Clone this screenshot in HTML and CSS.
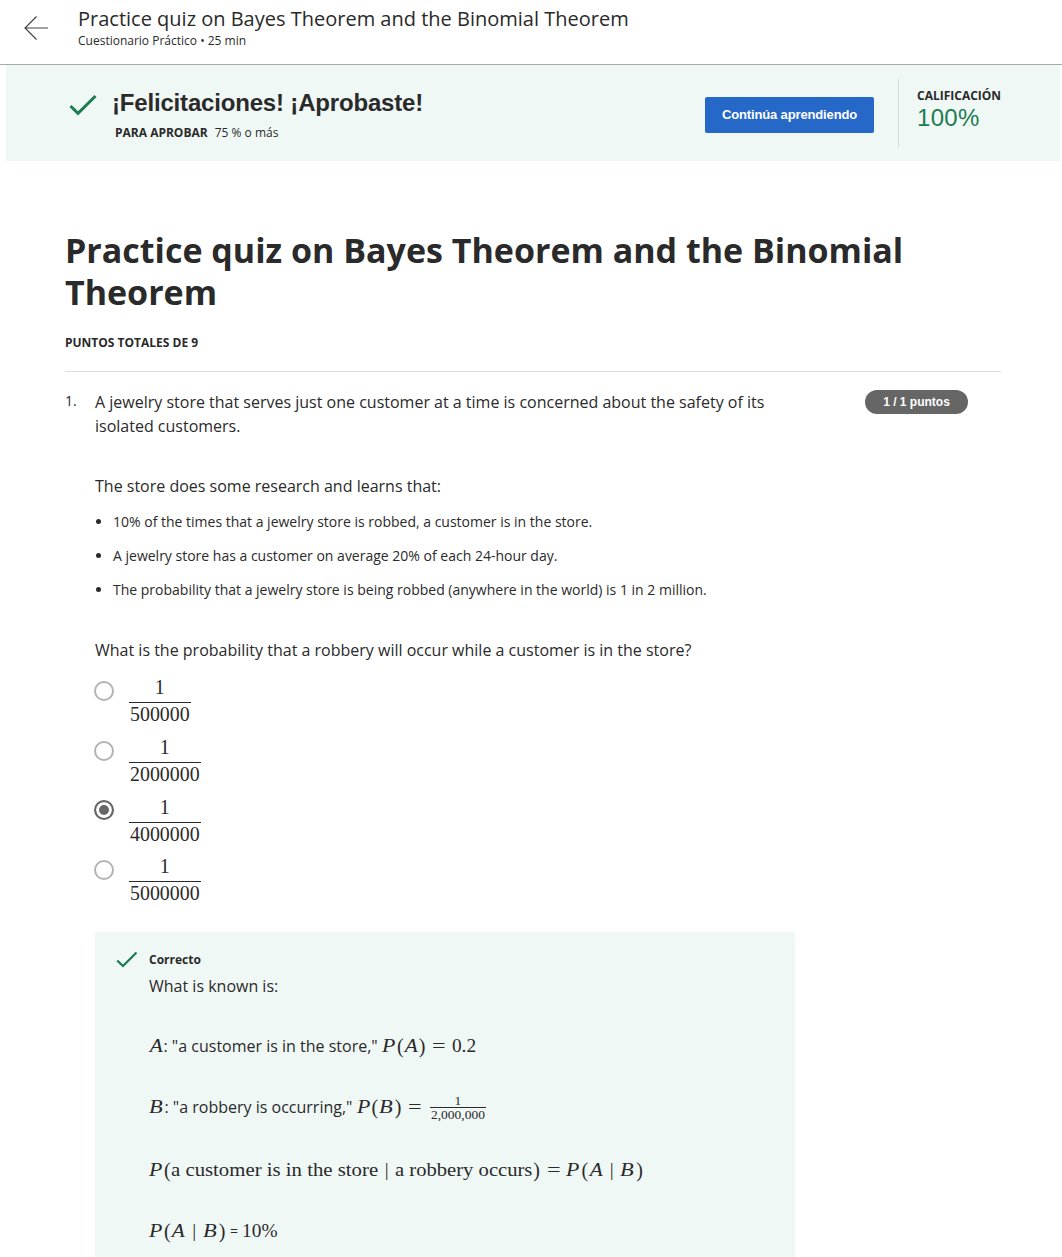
FILE: index.html
```html
<!DOCTYPE html>
<html lang="es">
<head>
<meta charset="utf-8">
<title>Practice quiz on Bayes Theorem and the Binomial Theorem</title>
<link rel="stylesheet" href="styles.css">
</head>
<body>
<header class="topbar">
  <svg class="back" width="26" height="26" viewBox="0 0 26 26" fill="none" stroke="#444" stroke-width="1.2"><path d="M25 13H2M13.500 1.500L2 13l11.500 11.500"/></svg>
  <div>
    <div class="top-title">Practice quiz on Bayes Theorem and the Binomial Theorem</div>
    <div class="top-sub">Cuestionario Práctico • 25 min</div>
  </div>
</header>
<section class="banner">
  <svg class="big-check" width="28" height="22" viewBox="0 0 28 22" fill="none" stroke="#1d7c50" stroke-width="3"><path d="M1.500 12L9 19.300 26.500 2"/></svg>
  <div class="result">
    <div class="congrats"><span>¡Felicitaciones! ¡Aprobaste!</span></div>
    <div class="pass"><b>PARA APROBAR</b><span>75 % o más</span></div>
  </div>
  <button class="continue"><span>Continúa aprendiendo</span></button>
  <div class="grade">
    <div class="grade-label">CALIFICACIÓN</div>
    <div class="grade-value">100%</div>
  </div>
</section>
<main class="quiz">
  <h1>Practice quiz on Bayes Theorem and the Binomial Theorem</h1>
  <div class="total">PUNTOS TOTALES DE 9</div>
  <section class="question">
    <div class="number">1.</div>
    <div class="content">
      <p>A jewelry store that serves just one customer at a time is concerned about the safety of its isolated customers.</p>
      <p class="spaced">The store does some research and learns that:</p>
      <ul>
        <li>10% of the times that a jewelry store is robbed, a customer is in the store.</li>
        <li>A jewelry store has a customer on average 20% of each 24-hour day.</li>
        <li>The probability that a jewelry store is being robbed (anywhere in the world) is 1 in 2 million.</li>
      </ul>
      <p class="ask">What is the probability that a robbery will occur while a customer is in the store?</p>
      <div class="options">
        <div class="option"><i class="radio"></i><span class="frac"><span>1</span><span>500000</span></span></div>
        <div class="option"><i class="radio"></i><span class="frac"><span>1</span><span>2000000</span></span></div>
        <div class="option"><i class="radio checked"></i><span class="frac"><span>1</span><span>4000000</span></span></div>
        <div class="option"><i class="radio"></i><span class="frac"><span>1</span><span>5000000</span></span></div>
      </div>
      <section class="feedback">
        <svg class="check" width="22" height="18" viewBox="0 0 22 18" fill="none" stroke="#1d7c50" stroke-width="2.300"><path d="M1.200 9.500L7 15 20.500 1.500"/></svg>
        <div>
          <div class="correct">Correcto</div>
          <p>What is known is:</p>
          <div class="line l1"><span class="math"><i class="a">A</i></span><span class="words w1">: "a customer is in the store,"</span><span class="math"><i class="p">P</i><span class="par">(</span><i class="a">A</i><span class="par">)</span><span class="eq">=</span><span class="num">0.2</span></span></div>
          <div class="line l2"><span class="math"><i class="b lead">B</i></span><span class="words w2">: "a robbery is occurring,"</span><span class="math"><i class="p">P</i><span class="par">(</span><i class="b">B</i><span class="par">)</span><span class="eq">=</span><span class="small-frac"><span>1</span><span>2,000,000</span></span></span></div>
          <div class="line l3"><span class="math"><i class="p">P</i><span class="par">(</span><span class="phrase ph1">a customer is in the store</span><span class="bar">|</span><span class="phrase ph2">a robbery occurs</span><span class="par">)</span><span class="eq">=</span><i class="p">P</i><span class="par">(</span><i class="a">A</i><span class="bar">|</span><i class="b">B</i><span class="par">)</span></span></div>
          <div class="line l4"><span class="math"><i class="p">P</i><span class="par">(</span><i class="a">A</i><span class="bar">|</span><i class="b">B</i><span class="par">)</span></span><span class="words we">=</span><span class="math num">10%</span></div>
        </div>
      </section>
    </div>
    <div class="badge">1 / 1 puntos</div>
  </section>
</main>
</body>
</html>
```
FILE: styles.css
```css
* { box-sizing: border-box; }
body { margin: 0; background: #fff; color: #2a2a2a; font-family: "Open Sans", sans-serif; font-size: 16px; line-height: 24px; }
p, h1, ul { margin: 0; }
.topbar { display: flex; height: 65px; border-bottom: 1px solid #aaa; padding: 7px 0 0 23px; }
.back { margin: 8px 29px 0 0; }
.top-title { font-size: 20px; line-height: 24px; white-space: nowrap; }
.top-sub { font-size: 12px; line-height: 18px; margin-top: 1px; }
.banner { display: flex; height: 96px; margin: 0 2px 0 6px; background: #f0f8f6; padding-left: 63px; }
.big-check { margin: 29px 15px 0 0; }
.result { width: 593px; padding-top: 24px; white-space: nowrap; }
.congrats { font: bold 24px/28px "Liberation Sans", sans-serif; letter-spacing: -0.18px; }
.pass { display: flex; gap: 7px; margin: 7px 0 0 3px; font-size: 12px; line-height: 18px; }
.continue { width: 169px; height: 36px; margin-top: 32px; padding: 0; border: 0; border-radius: 2px; background: #2668c7; color: #fff; font: bold 13px/36px "Liberation Sans", sans-serif; letter-spacing: -0.14px; white-space: nowrap; }
.grade { height: 68px; margin: 14px 0 0 24px; border-left: 1px solid #d5dbd9; padding: 8px 0 0 18px; }
.grade-label { font-size: 12px; line-height: 17px; font-weight: bold; }
.grade-value { font: 24px/28px "Liberation Sans", sans-serif; letter-spacing: 0.3px; color: #1d7c50; }
.quiz { width: 936px; margin-left: 65px; padding-top: 68px; }
h1 { font-size: 34px; line-height: 42px; font-weight: bold; }
.total { height: 59px; padding-top: 20px; border-bottom: 1px solid #dcdcdc; font-size: 12px; line-height: 20px; font-weight: bold; }
.question { display: flex; padding-top: 18px; }
.number { width: 30px; font-size: 14px; line-height: 22px; }
.content { width: 700px; }
.spaced { margin-top: 36px; }
ul { padding: 12px 0 0 18px; font-size: 14px; }
li { height: 24px; margin-bottom: 10px; }
.ask { margin-top: 36px; }
.options { height: 270px; padding-top: 15px; }
.option { display: flex; height: 59.7px; align-items: flex-start; }
.radio { width: 20px; height: 20px; margin: 4px 15px 0 -1px; border: 2px solid #b3b3b3; border-radius: 50%; }
.radio.checked { border-color: #666; background: #666; box-shadow: inset 0 0 0 3px #fff; }
.frac { display: flex; flex-direction: column; align-items: center; font: 19.900px/24px "Liberation Serif", serif; }
.frac span:first-child { height: 25px; line-height: 21px; }
.frac span:last-child { border-top: 1px solid #2a2a2a; padding: 0 1px; line-height: 22px; }
.option:nth-child(3) .frac { padding-top: 0.4px; }
.feedback { display: flex; height: 325px; padding-left: 21px; background: #f0f8f6; }
.check { margin: 19px 11px 0 0; }
.correct { padding-top: 18px; font-size: 12px; line-height: 20px; font-weight: bold; margin-bottom: 4px; }
.line { display: flex; align-items: center; height: 28px; white-space: nowrap; }
.l1 { margin-top: 34px; }
.l2 { margin-top: 33px; }
.l3 { margin-top: 35px; }
.l4 { margin-top: 33px; }
.math { display: flex; align-items: center; font: 19.360px/28px "Liberation Serif", serif; }
.math > * { flex: none; display: block; }
.a, .b, .p, .phrase { transform-origin: left; }
.a { width: 14.500px; font-size: 19px; transform: translateX(0.8px) scaleX(1.12); }
.b { width: 16px; font-size: 19px; transform: scaleX(1.18); }
.p { width: 15px; font-size: 19px; transform: scaleX(1.15); }
.lead { width: 15.500px; }
.par { width: 7.300px; font-size: 20px; }
.eq { width: 25.800px; text-align: center; transform: scaleX(1.25); }
.bar { width: 17px; text-align: center; }
.ph1 { width: 207px; transform: scaleX(1.073); }
.ph2 { width: 138px; transform: scaleX(1.065); }
.w1 { width: 218.500px; }
.w2 { width: 192px; }
.we { width: 16px; text-align: center; font-size: 14px; }
.small-frac { display: flex !important; flex-direction: column; align-items: center; margin-left: 2px; font-size: 13.500px; line-height: 13px; }
.small-frac span:last-child { border-top: 1px solid #2a2a2a; padding: 0 1px; }
.badge { width: 103px; height: 24px; margin-left: 70px; border-radius: 12px; background: #666; color: #fff; text-align: center; font: bold 12px/24px "Liberation Sans", sans-serif; }
```
